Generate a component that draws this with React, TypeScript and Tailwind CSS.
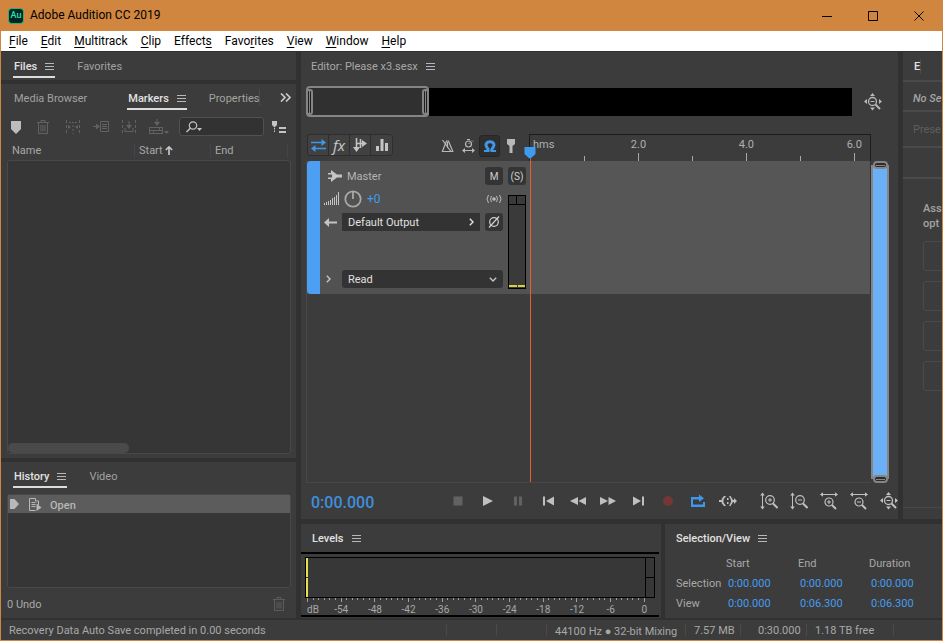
import type { ReactNode } from "react";

function Svg({ w, h, children, className = "" }: { w: number; h: number; children: ReactNode; className?: string }) {
  return (
    <svg width={w} height={h} viewBox={`0 0 ${w} ${h}`} className={`shrink-0 ${className}`} fill="none" stroke="currentColor" aria-hidden="true">
      {children}
    </svg>
  );
}

function PanelMenu({ label }: { label: string }) {
  return (
    <button aria-label={label} className="text-[#b8b8b8]">
      <Svg w={9} h={9}>
        <path d="M0 1.500h9M0 4.500h9M0 7.500h9" />
      </Svg>
    </button>
  );
}

function ActiveTab({ name }: { name: string }) {
  return (
    <div className="flex h-full items-center gap-2 border-b-2 border-[#dcdcdc] px-px pt-1">
      <button className="font-medium text-[#e2e2e2]">{name}</button>
      <PanelMenu label={`${name} panel menu`} />
    </div>
  );
}

function Tab({ name }: { name: string }) {
  return <button className="text-[#a2a2a2]">{name}</button>;
}

function Trash() {
  return (
    <Svg w={12} h={16}>
      <path d="M0 3.500h12M4 3.500V1.500h4v2M1.500 3.500v11h9v-11M4 6v6.500M6 6v6.500M8 6v6.500" />
    </Svg>
  );
}

function ZoomAll() {
  return (
    <Svg w={18} h={18}>
      <circle cx="8.500" cy="8.500" r="4" strokeWidth="1.300" />
      <path d="M6.500 8.500h4" />
      <path d="M11.500 11.500l4.500 4.500" strokeWidth="2" />
      <path d="M8.500 0l2.500 3h-5zM8.500 17.500l2.500-3h-5zM0 8.500l3-2.500v5zM18 8.500l-3-2.500v5z" fill="currentColor" stroke="none" />
    </Svg>
  );
}

function ZoomAxis({ horizontal = false, plus = false }: { horizontal?: boolean; plus?: boolean }) {
  return (
    <Svg w={18} h={18}>
      {horizontal ? (
        <>
          <path d="M1 2.500h16" />
          <path d="M0 2.500l3-2.300v4.600zM18 2.500l-3-2.300v4.600z" fill="currentColor" stroke="none" />
          <circle cx="9" cy="10" r="4" strokeWidth="1.200" />
          <path d={plus ? "M7 10h4M9 8v4" : "M7 10h4"} />
          <path d="M12 13l4 4" strokeWidth="2" />
        </>
      ) : (
        <>
          <path d="M2.500 2v14" />
          <path d="M2.500 .5l2.300 3H.2zM2.500 17.500l2.300-3H.2z" fill="currentColor" stroke="none" />
          <circle cx="10" cy="8" r="4.300" strokeWidth="1.200" />
          <path d={plus ? "M8 8h4M10 6v4" : "M8 8h4"} />
          <path d="M13 11.500l4.500 4.500" strokeWidth="2" />
        </>
      )}
    </Svg>
  );
}

const menus: [string, string, string][] = [
  ["", "F", "ile"],
  ["", "E", "dit"],
  ["", "M", "ultitrack"],
  ["", "C", "lip"],
  ["Effect", "s", ""],
  ["Favo", "r", "ites"],
  ["", "V", "iew"],
  ["", "W", "indow"],
  ["", "H", "elp"],
];

function TitleBar() {
  return (
    <header className="flex h-[31px] shrink-0 items-center bg-[#d0863e] pl-[7px] text-black">
      <div className="flex h-4 w-4 items-center justify-center rounded-sm border border-[#2fae7c] bg-[#04241f] text-[9px] font-medium text-[#2be0b4]">Au</div>
      <h1 className="ml-1.5 text-[12px] font-normal">Adobe Audition CC 2019</h1>
      <div className="ml-auto flex">
        <button aria-label="Minimize" className="flex h-[30px] w-[46px] items-center justify-center">
          <Svg w={10} h={10}><path d="M0 5.500h10" /></Svg>
        </button>
        <button aria-label="Maximize" className="flex h-[30px] w-[46px] items-center justify-center">
          <Svg w={10} h={10}><path d="M.5.500h9v9h-9z" /></Svg>
        </button>
        <button aria-label="Close" className="flex h-[30px] w-[46px] items-center justify-center">
          <Svg w={10} h={10}><path d="M.5.500l9 9M9.500.500l-9 9" /></Svg>
        </button>
      </div>
    </header>
  );
}

function MarkersPanel() {
  return (
    <section className="flex min-h-0 flex-1 flex-col bg-[#3c3c3c] pr-[5px] pb-1 pl-1.5">
      <div className="flex h-[26px] shrink-0 items-center pl-[7px]">
        <div className="pt-0.5"><Tab name="Media Browser" /></div>
        <div className="ml-10 h-full"><ActiveTab name="Markers" /></div>
        <div className="ml-[22px] border-r border-[#4a4a4a] pt-0.5 whitespace-nowrap"><Tab name="Properties" /></div>
        <button aria-label="More panels" className="ml-auto text-[#c8c8c8]">
          <Svg w={11} h={9}><path d="M1 .5l4 4-4 4M6 .5l4 4-4 4" strokeWidth="1.700" /></Svg>
        </button>
      </div>
      <div className="flex h-[33px] shrink-0 items-center pl-1 text-[#626262]">
        <button aria-label="Add marker" className="text-[#bdbdbd]">
          <Svg w={10} h={14}><path d="M0 1h10v8l-5 5-5-5z" fill="currentColor" stroke="none" /></Svg>
        </button>
        <button aria-label="Delete marker" className="ml-4"><Trash /></button>
        <button aria-label="Merge markers" className="ml-4">
          <Svg w={16} h={14}>
            <path d="M1.500 0v14M14.500 0v14" strokeDasharray="3 2" />
            <path d="M4 2.500h2M7 2.500h2M10 2.500h2" />
            <path d="M3 5l3 2-3 2zM13 5l-3 2 3 2z" fill="currentColor" stroke="none" />
            <path d="M8 5v9" strokeDasharray="2 2" />
          </Svg>
        </button>
        <button aria-label="Insert into multitrack" className="ml-3">
          <Svg w={16} h={13}>
            <path d="M7.500 1.500h8v10h-8zM9 4.500h5M9 6.500h5M9 8.500h5M0 6.500h5" />
            <path d="M3 3.500l4 3-4 3z" fill="currentColor" stroke="none" />
          </Svg>
        </button>
        <button aria-label="Export audio" className="ml-3">
          <Svg w={16} h={14}>
            <path d="M1.500 0v14M14.500 0v14" strokeDasharray="3 2" />
            <path d="M8 1v6M4 8v3.500h8V8" /><path d="M5 5h6l-3 4z" fill="currentColor" stroke="none" />
          </Svg>
        </button>
        <button aria-label="Insert to playlist" className="ml-3">
          <Svg w={20} h={16}>
            <path d="M0 8.500h14M0 11.500h14M0 14.500h14M4.500 11v4M10.500 8v4M.5 8v7M13.500 8v7M8 0v5" />
            <path d="M5 3h6l-3 4zM15 12h5l-2.500 3z" fill="currentColor" stroke="none" />
          </Svg>
        </button>
        <label className="ml-2.5 flex h-[19px] w-[85px] items-center rounded-[3px] border border-[#515151] bg-[#323232] pl-1.5 text-[#c4c4c4]">
          <Svg w={17} h={12}>
            <circle cx="7" cy="4.500" r="3.700" strokeWidth="1.200" /><path d="M4.500 7L.5 11" strokeWidth="1.500" />
            <path d="M11 7h5l-2.500 3z" fill="currentColor" stroke="none" />
          </Svg>
          <input aria-label="Search markers" className="w-full min-w-0 bg-transparent outline-none" />
        </label>
        <button aria-label="Marker options" className="ml-2 text-[#c4c4c4]">
          <Svg w={14} h={14}>
            <path d="M0 1h5v4l-2.500 2.500L0 5z" fill="currentColor" stroke="none" />
            <path d="M2.500 8v5" strokeDasharray="1.500 1" /><path d="M7 8h7M7 12h7" strokeWidth="2" />
          </Svg>
        </button>
      </div>
      <div className="flex h-[17px] shrink-0 items-start text-[#a8a8a8] leading-[15px]">
        <div className="flex-1 border-r border-[#454545] pl-[5px]">Name</div>
        <div className="flex w-[76px] items-center gap-0.5 border-r border-[#454545] pl-1">
          Start
          <Svg w={8} h={9} className="text-[#c4c4c4]"><path d="M4 9V1M.8 4L4 .9 7.200 4" strokeWidth="1.700" /></Svg>
        </div>
        <div className="w-[77px] border-r border-[#454545] pl-1">End</div>
        <div className="w-[3px]" />
      </div>
      <div className="flex min-h-0 flex-1 items-end rounded-[3px] border border-[#484848] bg-[#363636]">
        <div className="h-2.5 w-[43%] rounded-full bg-[#4a4a4a]" />
      </div>
    </section>
  );
}

function HistoryPanel() {
  return (
    <section className="flex h-[156px] shrink-0 flex-col bg-[#3c3c3c] pr-[5px] pl-1.5">
      <div className="flex h-[26px] shrink-0 items-center pl-1.5">
        <div className="h-full"><ActiveTab name="History" /></div>
        <div className="ml-[22px] pt-0.5"><Tab name="Video" /></div>
      </div>
      <div className="mt-1.5 min-h-0 flex-1 rounded-[3px] border border-[#484848] bg-[#363636]">
        <div className="flex h-[18px] items-center bg-[#5c5c5c] pl-0.5 font-medium text-[#b8b8b8]">
          <Svg w={9} h={10}><path d="M0 0h4.500L9 5l-4.500 5H0z" fill="currentColor" stroke="none" /></Svg>
          <Svg w={13} h={13} className="ml-2.5">
            <path d="M6.500 12.500h-6V.5h6V3h3v4M2.500 4.500h4M2.500 6.500h4M2.500 8.500h4" />
            <path d="M7.500 5.500v7.500l5-3.500z" fill="currentColor" stroke="none" />
          </Svg>
          <span className="ml-2 pt-0.5">Open</span>
        </div>
      </div>
      <div className="flex h-[30px] shrink-0 items-center justify-between pt-0.5 pr-1.5 text-[#a8a8a8]">
        <span>0 Undo</span>
        <button aria-label="Delete history" className="text-[#5c5c5c]"><Trash /></button>
      </div>
    </section>
  );
}

const toolBtn = "flex h-5 w-[21px] items-center justify-center border-r border-[#2e2e2e] last:border-r-0";

function TrackTools() {
  return (
    <div className="flex w-[223px] shrink-0 items-start pl-px">
      <div className="flex overflow-hidden rounded-[3px] border border-[#2e2e2e] bg-[#414141] text-[#c4c4c4]">
        <button aria-label="Inputs and outputs" className={`${toolBtn} text-[#3f97ea]`}>
          <Svg w={15} h={13}>
            <path d="M0 3.500h12M3 9.500h12" strokeWidth="1.600" />
            <path d="M10.500 0l4.500 3.500L10.500 7zM4.500 6L0 9.500 4.500 13z" fill="currentColor" stroke="none" />
          </Svg>
        </button>
        <button aria-label="Effects" className={`${toolBtn} font-['Noto_Sans'] text-[15px] leading-4 italic`}>fx</button>
        <button aria-label="Sends" className={toolBtn}>
          <Svg w={14} h={14}>
            <path d="M3.500 0v10M3.500 5.500h7M7.500 1v9" strokeWidth="1.600" />
            <path d="M9 2l5 3.500L9 9zM0 9h7l-3.500 5z" fill="currentColor" stroke="none" />
          </Svg>
        </button>
        <button aria-label="EQ" className={toolBtn}>
          <Svg w={12} h={12}><path d="M1.500 12V7M6 12V0M10.500 12V4" strokeWidth="3" /></Svg>
        </button>
      </div>
      <div className="ml-auto flex h-[23px] items-center text-[#b8b8b8]">
        <button aria-label="Metronome">
          <Svg w={13} h={14}><path d="M.8 12.500h11L7.500 2h-2L1.500 12M1.500 1l8 11M6.500 3v6" strokeWidth="1.200" /></Svg>
        </button>
        <button aria-label="Time stretch" className="ml-2">
          <Svg w={13} h={14}>
            <circle cx="6.500" cy="5" r="3" strokeWidth="1.200" /><path d="M6.500 5l1.500-1.500M5 .5h3M10 1.500l1 1M1 11.500h11" />
            <path d="M0 11.500L3 9v5zM13 11.500L10 9v5z" fill="currentColor" stroke="none" />
          </Svg>
        </button>
        <button aria-label="Toggle snapping" className="ml-1 flex h-[22px] w-[21px] items-center justify-center rounded-[3px] border border-[#262626] bg-[#2e2e2e] text-[#3f97ea]">
          <Svg w={12} h={12}>
            <path d="M4 11V9C.2 5 2.500 1.700 6 1.700S11.800 5 8 9v2" strokeWidth="3" />
            <path d="M0 11h5.500M6.500 11H12" strokeWidth="2" />
          </Svg>
        </button>
        <button aria-label="Add marker at playhead" className="mr-3.5 ml-[7px]">
          <Svg w={8} h={14}><path d="M0 0h8v5L5.500 7v7h-3V7L0 5z" fill="currentColor" stroke="none" /></Svg>
        </button>
      </div>
    </div>
  );
}

function Ruler() {
  const seconds = [0, 1, 2, 3, 4, 5, 6];
  return (
    <div className="flex min-w-0 flex-1 items-end border border-b-0 border-[#1c1c1c] text-[#b0b0b0]">
      {seconds.map((s) => (
        <div key={s} className={`flex h-full min-w-0 basis-0 flex-col justify-end ${s === 6 ? "grow-[0.3]" : "grow"}`}>
          {s === 0 && <span className="mb-2.5 pl-[3px] leading-[13px]">hms</span>}
          {s > 0 && s % 2 === 0 && (
            <div className="flex w-px justify-center"><span className="leading-[13px]">{s}.0</span></div>
          )}
          {s > 0 && <div className={`w-px bg-[#a8a8a8] ${s % 2 ? "h-[5px]" : "mt-0.5 h-2"}`} />}
        </div>
      ))}
    </div>
  );
}

const darkBtn = "flex h-[18px] w-[18px] items-center justify-center rounded-[3px] bg-[#343434] text-[10px] text-[#d0d0d0]";

function MasterHeader() {
  return (
    <div className="flex h-[133px] w-[223px] shrink-0 overflow-hidden rounded-l-[4px] bg-[#525252] text-[#c4c4c4]">
      <div className="w-[13px] shrink-0 bg-[#4c9ff2]" />
      <div className="flex flex-1 flex-col gap-[5px] pt-1.5 pl-1">
        <div className="flex h-[18px] items-center">
          <Svg w={14} h={12} className="ml-1"><path d="M0 3h3V0l6 4.500h5v3H9L3 12V9H0V7.500h4v-3H0z" fill="currentColor" stroke="none" /></Svg>
          <span className="ml-[5px] text-[#b4b4b4]">Master</span>
          <button aria-label="Mute" className={`${darkBtn} ml-auto`}>M</button>
        </div>
        <div className="flex h-[18px] items-center">
          <Svg w={16} h={14}><path d="M.5 13v-2M2.500 13v-3M4.500 13V9M6.500 13V8M8.500 13V6M10.500 13V5M12.500 13V3M14.500 13V0" /></Svg>
          <Svg w={18} h={18} className="ml-1 text-[#a8a8a8]"><circle cx="9" cy="9" r="7.700" strokeWidth="1.800" /><path d="M9 2v7" strokeWidth="1.800" /></Svg>
          <span className="ml-[5px] text-[12px] text-[#3f9bee]">+0</span>
          <Svg w={16} h={10} className="mr-px ml-auto text-[#b8b8b8]">
            <circle cx="8" cy="5" r="1.800" fill="currentColor" stroke="none" />
            <path d="M5.500 2Q3.500 5 5.500 8M10.500 2q2 3 0 6M2.500 1Q-.5 5 2.500 9M13.500 1q3 4 0 8" />
          </Svg>
        </div>
        <div className="flex h-[18px] items-center">
          <Svg w={13} h={9}><path d="M3 4.500h10" strokeWidth="2" /><path d="M5 0v9L0 4.500z" fill="currentColor" stroke="none" /></Svg>
          <button className="ml-[5px] flex h-[18px] flex-1 items-center justify-between bg-[#333333] pr-1.5 pl-1.5 text-[#e0e0e0]">
            Default Output
            <Svg w={5} h={8}><path d="M.8.800L4 4 .8 7.200" strokeWidth="1.400" /></Svg>
          </button>
          <button aria-label="Bypass output" className={`${darkBtn} ml-[5px]`}>
            <Svg w={12} h={12}><circle cx="6" cy="6" r="4.300" strokeWidth="1.200" /><path d="M1 11.500L11 .5" strokeWidth="1.200" /></Svg>
          </button>
        </div>
        <div className="mt-[34px] flex h-[18px] items-center">
          <button aria-label="Expand automation" className="w-[18px] pl-0.5"><Svg w={5} h={8}><path d="M.8.800L4 4 .8 7.200" strokeWidth="1.400" /></Svg></button>
          <div className="grid flex-1 items-center">
            <select aria-label="Automation mode" className="col-start-1 row-start-1 h-[18px] appearance-none rounded-[3px] bg-[#333333] pl-1.5 text-[#e0e0e0]">
              <option>Read</option>
            </select>
            <Svg w={8} h={5} className="pointer-events-none col-start-1 row-start-1 mr-1.5 justify-self-end"><path d="M.8.800L4 4 7.200.800" strokeWidth="1.400" /></Svg>
          </div>
        </div>
      </div>
      <div className="mr-1 ml-[5px] flex w-[18px] shrink-0 flex-col pt-1.5">
        <button aria-label="Solo safe" className={darkBtn}>(S)</button>
        <div className="mt-2.5 flex h-[94px] flex-col border border-black bg-[#3a3a3a]">
          <div className="grid h-[9px] grid-cols-2 border-b border-black"><div className="border-r border-black" /></div>
          <div className="mt-auto mb-px flex gap-px"><div className="h-0.5 flex-1 bg-[#d8d040]" /><div className="h-0.5 flex-1 bg-[#d8d040]" /></div>
        </div>
      </div>
    </div>
  );
}

function NavigatorGrip() {
  return (
    <div className="z-10 flex h-2 w-[15px] items-center rounded-[4px] border-2 border-[#858585] bg-[#2c2c2c] px-px">
      <div className="h-px w-full bg-[#858585]" />
    </div>
  );
}

function VerticalNavigator() {
  return (
    <div className="flex w-[18px] shrink-0 flex-col items-center">
      <NavigatorGrip />
      <div className="-my-1 w-full flex-1 border-2 border-[#858585] bg-[#6bb0f7]" />
      <NavigatorGrip />
    </div>
  );
}

function Handle() {
  return <div className="flex h-[26px] w-[7px] justify-center rounded-[3px] border-2 border-[#858585] bg-[#1e1e1e]"><div className="w-px bg-[#858585]" /></div>;
}

const transport: [string, string, ReactNode][] = [
  ["Stop", "text-[#626262]", <path d="M4.500 4.500h9v9h-9z" />],
  ["Play", "", <path d="M4 4l10 5-10 5z" />],
  ["Pause", "text-[#626262]", <path d="M5 4.500h3v9H5zM10 4.500h3v9h-3z" />],
  ["Move playhead to previous", "", <path d="M4 4.500h2v9H4zM15 4.500v9L7 9z" />],
  ["Rewind", "", <path d="M9 5v8L1 9zM17 5v8L9.500 9z" />],
  ["Fast forward", "", <path d="M1 5v8l8-4zM9.500 5v8L17 9z" />],
  ["Move playhead to next", "", <path d="M13 4.500h2v9h-2zM4 4.500v9L12 9z" />],
  ["Record", "text-[#743736]", <circle cx="9" cy="9" r="5" />],
  ["Loop playback", "text-[#3f97ea]", <path d="M2 5h8V2.500l5 3.800-5 3.800V7.500H4V12.500h10V10h2v5H2z" />],
  ["Skip selection", "", <path d="M0 8h3l-.5-1L5 4h2L4.500 7.500v3L7 14H5l-2.500-3 .5-1H0zM8 6h1.500v2H8zM8 10h1.500v2H8zM10 4h1.500L14 8h1V6l3 3-3 3v-2h-1l-2.500 4H10l2-4V8z" />],
];

function Transport() {
  return (
    <div className="flex h-9 shrink-0 items-center pl-[5px]">
      <time className="pt-1 text-[16px] leading-5 font-medium text-[#3f8fdc]">0:00.000</time>
      <div className="ml-auto flex gap-3 text-[#c0c0c0]">
        {transport.map(([label, color, icon]) => (
          <button key={label} aria-label={label} className={color}>
            <Svg w={18} h={18}><g fill="currentColor" stroke="none">{icon}</g></Svg>
          </button>
        ))}
      </div>
      <div className="ml-[23px] flex gap-3 text-[#c0c0c0]">
        <button aria-label="Zoom in amplitude"><ZoomAxis plus /></button>
        <button aria-label="Zoom out amplitude"><ZoomAxis /></button>
        <button aria-label="Zoom in time"><ZoomAxis horizontal plus /></button>
        <button aria-label="Zoom out time"><ZoomAxis horizontal /></button>
        <button aria-label="Zoom out full"><ZoomAll /></button>
      </div>
    </div>
  );
}

function EditorPanel() {
  return (
    <section className="flex min-w-0 flex-1 flex-col bg-[#3c3c3c] pl-[5px]">
      <div className="flex h-[29px] shrink-0 items-center gap-2 pl-[5px] text-[#a8a8a8]">
        <h2>Editor: Please x3.sesx</h2>
        <PanelMenu label="Editor panel menu" />
      </div>
      <div className="mt-1 flex h-[33px] shrink-0 items-center pr-4">
        <div className="flex h-[31px] w-[123px] shrink-0 items-center justify-between rounded-[4px] border-2 border-[#858585] bg-[#303030]">
          <div className="-ml-0.5"><Handle /></div>
          <div className="-mr-0.5"><Handle /></div>
        </div>
        <div className="h-7 flex-1 bg-black" />
        <button aria-label="Zoom out full" className="ml-3 text-[#b8b8b8]"><ZoomAll /></button>
      </div>
      <div className="mt-4 flex h-[27px] shrink-0 pr-[27px]">
        <TrackTools />
        <Ruler />
      </div>
      <div className="flex min-h-0 flex-1 pr-[9px]">
        <div className="relative min-w-0 flex-1 border-b border-l border-[#484848]">
          <div className="flex bg-[#565656]">
            <MasterHeader />
            <div className="flex-1 border-r border-l border-[#333333]" />
          </div>
          <div className="absolute -top-[15px] bottom-0 left-[217px] flex w-3 flex-col items-center">
            <Svg w={12} h={13} className="text-[#3f9bee]"><path d="M.5 1h11v7L6 13 .5 8z" fill="currentColor" stroke="none" /></Svg>
            <div className="w-px flex-1 bg-[#e0622c]" />
          </div>
        </div>
        <VerticalNavigator />
      </div>
      <Transport />
    </section>
  );
}

function EssentialPanel() {
  return (
    <section className="flex w-[39px] shrink-0 flex-col overflow-hidden bg-[#3c3c3c] text-[#a4a4a4]">
      <div className="flex h-[30px] items-center border-b-2 border-[#4a4a4a] pl-[11px]">
        <span className="border-r border-[#4a4a4a] font-medium text-[#e2e2e2]">E</span>
      </div>
      <div className="flex h-[30px] items-center border-b-2 border-[#4a4a4a] pt-1 pl-2.5 font-medium whitespace-nowrap italic">No Se</div>
      <div className="flex h-9 items-center border-b-2 border-[#4a4a4a] pl-2.5 text-[#5e5e5e]">Prese</div>
      <div className="h-[31px] border-b-2 border-[#4a4a4a]" />
      <div className="mt-[22px] pl-5 leading-[15px] font-medium">Ass<br />opt</div>
      <div className="mt-2.5 flex flex-col gap-2.5 pl-5">
        {["Dialogue", "Music", "SFX", "Ambience"].map((kind) => (
          <button key={kind} aria-label={kind} className="-mr-2 h-[30px] rounded-[3px] border border-[#4a4a4a]" />
        ))}
      </div>
      <div className="mt-auto h-3 border-t border-[#484848]" />
    </section>
  );
}

function LevelsPanel() {
  const marks = Array.from({ length: 61 }, (_, i) => i - 60);
  return (
    <section className="flex min-w-0 flex-1 flex-col bg-[#3c3c3c] pr-0.5">
      <div className="flex h-7 shrink-0 items-center gap-2 pl-[11px]">
        <h2 className="font-medium text-[#e2e2e2]">Levels</h2>
        <PanelMenu label="Levels panel menu" />
      </div>
      <div className="flex h-[65px] flex-col border-y-2 border-black pt-[3px] pr-1 pl-1">
        <div className="flex h-[41px] shrink-0 border border-black bg-[#373737]">
          <div className="grid w-0.5 grid-rows-2 gap-px"><div className="bg-[#e8e04a]" /><div className="bg-[#e8e04a]" /></div>
          <div className="flex-1" />
          <div className="grid w-[9px] grid-rows-2 border-l border-black"><div className="border-b border-black" /></div>
        </div>
        <div className="flex h-1 shrink-0 items-start justify-between pr-2.5 pl-0.5">
          {marks.map((m) => <div key={m} className={`w-px bg-[#a0a0a0] ${m % 6 ? "h-0.5" : "h-1"}`} />)}
        </div>
        <div className="flex justify-between pr-2.5 pl-0.5 text-[10px] leading-[15px] text-[#a8a8a8]">
          {marks.filter((m) => m % 6 === 0).map((m) => (
            <div key={m} className="flex w-px justify-center first:justify-start"><span>{m === -60 ? "dB" : m}</span></div>
          ))}
        </div>
      </div>
    </section>
  );
}

function SelectionPanel() {
  const rows = [
    ["Selection", "0:00.000", "0:00.000", "0:00.000"],
    ["View", "0:00.000", "0:06.300", "0:06.300"],
  ];
  return (
    <section className="w-[277px] shrink-0 bg-[#3c3c3c] pl-[11px]">
      <div className="flex h-7 items-center gap-2">
        <h2 className="font-medium text-[#e2e2e2]">Selection/View</h2>
        <PanelMenu label="Selection/View panel menu" />
      </div>
      <table className="mt-px w-full table-fixed text-left text-[#a8a8a8]">
        <thead>
          <tr className="h-5">
            <td className="w-[50px]" />
            <th scope="col" className="w-[72px] font-normal">Start</th>
            <th scope="col" className="w-[71px] font-normal">End</th>
            <th scope="col" className="font-normal">Duration</th>
          </tr>
        </thead>
        <tbody>
          {rows.map(([name, ...values]) => (
            <tr key={name} className="h-5">
              <th scope="row" className="font-normal">{name}</th>
              {values.map((v, i) => <td key={i} className="pl-0.5 text-[#459df0]">{v}</td>)}
            </tr>
          ))}
        </tbody>
      </table>
    </section>
  );
}

function StatusBar() {
  const cell = "flex h-3 items-center border-l border-[#4a4a4a]";
  return (
    <footer className="flex h-[22px] shrink-0 items-center border-t-2 border-[#313131] bg-[#3c3c3c] pl-2 text-[#a8a8a8]">
      <span>Recovery Data Auto Save completed in 0.00 seconds</span>
      <div className={`${cell} ml-auto w-[50px]`} />
      <div className={`${cell} w-[50px]`} />
      <div className={`${cell} w-[139px] pt-0.5 pl-2 whitespace-nowrap`}>44100 Hz ● 32-bit Mixing</div>
      <div className={`${cell} w-[55px] pl-2`}>7.57 MB</div>
      <div className={`${cell} w-[66px] pl-[17px]`}>0:30.000</div>
      <div className={`${cell} w-[87px] pl-2`}>1.18 TB free</div>
      <div className={`${cell} w-[49px]`} />
    </footer>
  );
}

export default function App() {
  return (
    <div className="flex h-screen flex-col overflow-hidden border-x border-b border-[#d0863e] bg-[#313131] font-[Roboto,'Noto_Sans',sans-serif] text-[11px] leading-[15px] whitespace-nowrap">
      <TitleBar />
      <nav className="flex h-5 shrink-0 items-center gap-[13px] bg-white pl-2 text-[12px] text-black">
        {menus.map(([before, key, after]) => (
          <button key={before + key + after}>{before}<span className="underline underline-offset-2">{key}</span>{after}</button>
        ))}
      </nav>
      <main className="flex min-h-0 flex-1 gap-[5px] pt-px">
        <div className="flex w-[295px] shrink-0 flex-col gap-1">
          <section className="flex h-7 shrink-0 items-center bg-[#3c3c3c] pl-3">
            <div className="h-[26px] self-start"><ActiveTab name="Files" /></div>
            <div className="ml-[22px]"><Tab name="Favorites" /></div>
          </section>
          <MarkersPanel />
          <HistoryPanel />
        </div>
        <div className="flex min-w-0 flex-1 flex-col gap-[5px]">
          <div className="flex min-h-0 flex-1 gap-[5px]">
            <EditorPanel />
            <EssentialPanel />
          </div>
          <div className="flex h-[94px] shrink-0 gap-1">
            <LevelsPanel />
            <SelectionPanel />
          </div>
        </div>
      </main>
      <StatusBar />
    </div>
  );
}
